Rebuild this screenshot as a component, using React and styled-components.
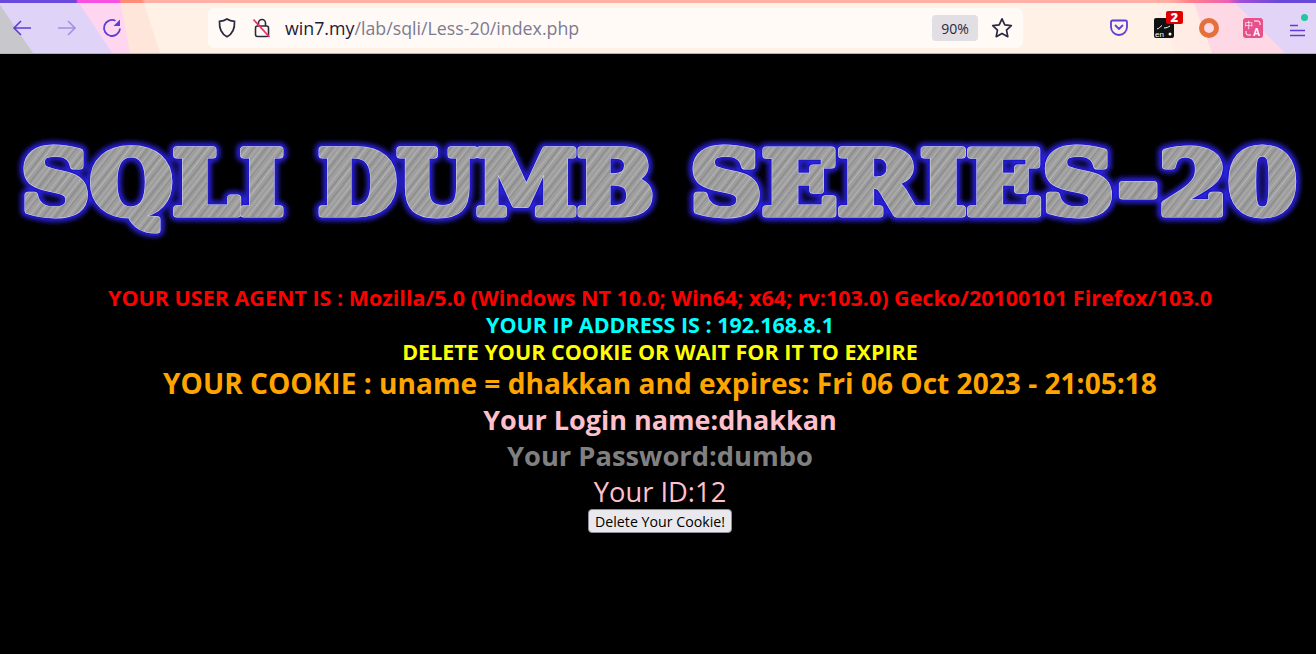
import React from "react";
import styled, { createGlobalStyle } from "styled-components";

const GlobalStyle = createGlobalStyle`
  html, body { margin: 0; padding: 0; background: #000; }
  body { font-family: "Open Sans", "Noto Sans", sans-serif; overflow: hidden; }
`;

const themeArt = `<svg xmlns='http://www.w3.org/2000/svg' width='1316' height='53'>
<defs><linearGradient id='g' x1='0' x2='1'><stop offset='0' stop-color='%23fff0e6'/><stop offset='0.5' stop-color='%23ffe8e4'/><stop offset='1' stop-color='%23ffdcea'/></linearGradient></defs>
<rect width='1316' height='53' fill='%23fff1e6'/>
<polygon points='1150,0 1316,0 1316,53 1175,53' fill='url(%23g)'/>
<polygon points='1193,0 1316,0 1316,53 1212,53' fill='%23ffd8e6'/>
<polygon points='1232,0 1316,0 1316,53 1285,53' fill='%23e2d4f6'/>
<polygon points='143,0 0,0 0,53 160,53' fill='%23ffe6da'/>
<polygon points='120,0 0,0 0,53 130,53' fill='%23ffd6f0'/>
<polygon points='77,0 0,0 0,53 112,53' fill='%23dfd3f7'/>
<polygon points='0,5 0,53 33,53' fill='%23c8c8cc'/>
</svg>`.replace(/\n/g, "");

const Page = styled.div`
  width: 1316px;
  height: 654px;
  background: #000;
  display: flex;
  flex-direction: column;
`;

const Toolbar = styled.div`
  height: 54px;
  flex: none;
  display: flex;
  flex-direction: column;
  box-sizing: border-box;
  border-bottom: 1px solid #c4aca0;
  background: url("data:image/svg+xml,${themeArt}") no-repeat left top;
`;

const Strip = styled.div`
  height: 3px;
  flex: none;
  background: linear-gradient(to right, #6a48dc 0 76px, #f850e0 78px 119px, #ff8c78 121px 142px, #ffb0a4 145px 1170px, #ff8088 1190px, #f060b0 1228px, #a050d8 1240px, #6848d8 1280px);
`;

const ToolRow = styled.div`
  flex: 1;
  display: flex;
  align-items: center;
`;

const NavGroup = styled.div`
  display: flex;
  align-items: center;
  width: 208px;
  padding-left: 10px;
  gap: 21px;
  flex: none;
  box-sizing: border-box;
`;

const NavButton = styled.div`
  width: 24px;
  height: 24px;
  display: flex;
  align-items: center;
  justify-content: center;
  opacity: ${(p) => (p.$off ? 0.45 : 1)};
`;

const UrlBar = styled.div`
  width: 815px;
  height: 40px;
  flex: none;
  background: #fffaf6;
  border-radius: 6px;
  display: flex;
  align-items: center;
  padding: 0 10px 0 8px;
  box-sizing: border-box;
`;

const UrlIcon = styled.div`
  width: 22px;
  height: 24px;
  margin-right: ${(p) => p.$gap}px;
  display: flex;
  align-items: center;
  justify-content: center;
`;

const UrlText = styled.div`
  flex: 1;
  font-size: 17.8px;
  color: #1c1b3a;
  white-space: nowrap;
  span { color: #7d7a92; }
`;

const ZoomBadge = styled.div`
  width: 46px;
  height: 26px;
  border-radius: 4px;
  background: #e2dfe4;
  color: #2a2840;
  font-size: 14px;
  display: flex;
  align-items: center;
  justify-content: center;
  margin-right: 13px;
`;

const RightIcons = styled.div`
  display: flex;
  align-items: center;
  flex: 1;
  padding-left: 74px;
`;

const ExtSlot = styled.div`
  width: 44.7px;
  height: 24px;
  flex: none;
  display: flex;
  align-items: center;
  justify-content: center;
  position: relative;
`;

const RedBadge = styled.div`
  position: absolute;
  top: -5px;
  left: 24px;
  width: 17px;
  height: 13px;
  background: #e00000;
  border-radius: 2px;
  color: #fff;
  font-size: 13px;
  font-weight: 800;
  line-height: 13px;
  text-align: center;
`;

const GreenDot = styled.div`
  position: absolute;
  top: -2px;
  right: 12px;
  width: 7px;
  height: 7px;
  border-radius: 50%;
  background: #20c8a0;
`;

const Content = styled.main`
  flex: 1;
  display: flex;
  flex-direction: column;
  align-items: center;
  padding: 73px 0 0 4px;
`;

const Banner = styled.svg`
  display: block;
  width: 1316px;
  height: 120px;
  flex: none;
  margin: 0 0 37px -4px;
`;

const Line = styled.div`
  color: ${(p) => p.$color};
  font-size: ${(p) => p.$size}px;
  line-height: ${(p) => p.$height}px;
  font-weight: ${(p) => p.$weight || 700};
  white-space: nowrap;
  text-align: center;
`;

const DeleteButton = styled.button`
  font-family: "Open Sans", "Noto Sans", sans-serif;
  font-size: 14.2px;
  height: 24px;
  width: 144px;
  margin-top: -1px;
  padding: 0;
  color: #000;
  background: #e9e9ed;
  border: 1px solid #8f8f9d;
  border-radius: 4px;
`;

const stroke = "#5b3fd6";

export default function App() {
  return (
    <Page>
      <GlobalStyle />
      <Toolbar>
        <Strip />
        <ToolRow>
          <NavGroup>
            <NavButton>
              <svg width="22" height="22" viewBox="0 0 22 22" fill="none" stroke={stroke} strokeWidth="1.6">
                <path d="M20 11H3M10 4l-7 7 7 7" />
              </svg>
            </NavButton>
            <NavButton $off>
              <svg width="22" height="22" viewBox="0 0 22 22" fill="none" stroke={stroke} strokeWidth="1.6">
                <path d="M2 11h17M12 4l7 7-7 7" />
              </svg>
            </NavButton>
            <NavButton>
              <svg width="22" height="22" viewBox="0 0 22 22" fill="none" stroke={stroke} strokeWidth="1.8">
                <path d="M19 11.500A8 8 0 1 1 14.500 3.800" />
                <path d="M19 2.500v6.500h-6.500z" fill={stroke} stroke="none" />
              </svg>
            </NavButton>
          </NavGroup>
          <UrlBar>
            <UrlIcon $gap={13}>
              <svg width="20" height="22" viewBox="0 0 20 22" fill="none" stroke="#2a2840" strokeWidth="1.7">
                <path d="M10 2c2 1.400 4.600 2.200 7.500 2.300.4 7-1.800 12.600-7.500 15.500C4.300 16.900 2.100 11.300 2.500 4.300 5.400 4.200 8 3.400 10 2z" />
              </svg>
            </UrlIcon>
            <UrlIcon $gap={12}>
              <svg width="20" height="22" viewBox="0 0 20 22" fill="none">
                <path d="M6.500 9V6a3.500 3.500 0 0 1 7 0v3" stroke="#2a2840" strokeWidth="1.600" />
                <rect x="3.500" y="9" width="13" height="10.500" rx="2" stroke="#2a2840" strokeWidth="1.600" />
                <path d="M1.500 2.500 17.500 20" stroke="#f03060" strokeWidth="1.800" />
              </svg>
            </UrlIcon>
            <UrlText>
              win7.my<span>/lab/sqli/Less-20/index.php</span>
            </UrlText>
            <ZoomBadge>90%</ZoomBadge>
            <svg width="22" height="22" viewBox="0 0 22 22" fill="none" stroke="#2a2840" strokeWidth="1.700" strokeLinejoin="round">
              <path d="M11 1.800l2.800 6.100 6.500.8-4.800 4.500 1.300 6.500-5.800-3.300-5.800 3.300 1.300-6.500L1.700 8.700l6.500-.8z" />
            </svg>
          </UrlBar>
          <RightIcons>
            <ExtSlot>
              <svg width="20" height="20" viewBox="0 0 20 20" fill="none" stroke={stroke} strokeWidth="1.800">
                <path d="M3.500 2.500h13A1.500 1.500 0 0 1 18 4v5a8 8 0 0 1-16 0V4a1.500 1.500 0 0 1 1.500-1.500z" />
                <path d="M6.500 7.500 10 11l3.500-3.500" strokeLinecap="round" />
              </svg>
            </ExtSlot>
            <ExtSlot>
              <svg width="20" height="20" viewBox="0 0 20 20">
                <rect width="20" height="20" rx="2" fill="#111" />
                <path d="M3 11c2-.5 3-2 5-3.500M10 10c3 0 4-1 6-2" stroke="#fff" strokeWidth="1" fill="none" />
                <circle cx="16" cy="16" r="1.500" fill="#fff" />
                <text x="1" y="19" fontSize="8" fill="#fff" fontFamily="Liberation Sans, sans-serif">en</text>
              </svg>
              <RedBadge>2</RedBadge>
            </ExtSlot>
            <ExtSlot>
              <svg width="20" height="20" viewBox="0 0 20 20" fill="none">
                <circle cx="10" cy="10" r="7.500" stroke="#e4703a" strokeWidth="5" />
              </svg>
            </ExtSlot>
            <ExtSlot>
              <svg width="20" height="20" viewBox="0 0 20 20">
                <rect width="20" height="20" rx="3" fill="#e8508c" />
                <text x="1.500" y="10" fontSize="8.500" fill="#fff" fontFamily="Noto Sans CJK SC, sans-serif">中</text>
                <text x="10" y="17.500" fontSize="10" fontWeight="700" fill="#fff" fontFamily="Liberation Sans, sans-serif">A</text>
                <path d="M11 3h4a2 2 0 0 1 2 2v2M8 17H5a2 2 0 0 1-2-2v-2" stroke="#fff" strokeWidth="1" fill="none" />
              </svg>
            </ExtSlot>
            <ExtSlot>
              <svg width="18" height="14" viewBox="0 0 18 14" stroke={stroke} strokeWidth="1.500" style={{ marginTop: 4 }}>
                <path d="M1 2.500h8M1 7.500h15M1 12.500h15" />
              </svg>
              <GreenDot />
            </ExtSlot>
          </RightIcons>
        </ToolRow>
      </Toolbar>
      <Content>
        <Banner viewBox="0 0 1316 120">
          <defs>
            <pattern id="brushed" width="31" height="31" patternUnits="userSpaceOnUse" patternTransform="rotate(-52)">
              <rect width="31" height="31" fill="#9e9e9e" />
              <rect y="2" width="31" height="1" fill="#b4b4b4" />
              <rect y="5" width="31" height="1.500" fill="#8a8a8a" />
              <rect y="9" width="31" height="1" fill="#adadad" />
              <rect y="11" width="31" height="1" fill="#8e8e8e" />
              <rect y="15" width="31" height="2" fill="#aaaaaa" />
              <rect y="19" width="31" height="1" fill="#858585" />
              <rect y="22" width="31" height="1" fill="#b8b8b8" />
              <rect y="26" width="31" height="1.500" fill="#8c8c8c" />
              <rect y="29" width="31" height="1" fill="#acacac" />
            </pattern>
            <filter id="glow" x="-5%" y="-20%" width="110%" height="140%">
              <feGaussianBlur stdDeviation="2.500" />
            </filter>
            <g id="title" fontFamily="'DejaVu Serif', serif" fontWeight="700" fontSize="87" strokeLinejoin="round">
              <text x="21" y="87" textLength="263" lengthAdjust="spacingAndGlyphs">SQLI</text>
              <text x="318" y="87" textLength="336" lengthAdjust="spacingAndGlyphs">DUMB</text>
              <text x="690" y="87" textLength="607" lengthAdjust="spacingAndGlyphs">SERIES-20</text>
            </g>
          </defs>
          <use href="#title" fill="#2a20d8" stroke="#2a20d8" strokeWidth="14" filter="url(#glow)" />
          <use href="#title" fill="#2018b8" stroke="#2018c8" strokeWidth="10" />
          <use href="#title" fill="#dcdcec" stroke="#dcdcec" strokeWidth="7" />
          <use href="#title" fill="url(#brushed)" stroke="url(#brushed)" strokeWidth="6" />
        </Banner>
        <Line $color="#f00" $size={21.5} $height={27}>YOUR USER AGENT IS : Mozilla/5.0 (Windows NT 10.0; Win64; x64; rv:103.0) Gecko/20100101 Firefox/103.0</Line>
        <Line $color="#0ff" $size={21.5} $height={27}>YOUR IP ADDRESS IS : 192.168.8.1</Line>
        <Line $color="#ff0" $size={21.5} $height={27}>DELETE YOUR COOKIE OR WAIT FOR IT TO EXPIRE</Line>
        <Line $color="#ffa500" $size={28.1} $height={37}>YOUR COOKIE : uname = dhakkan and expires: Fri 06 Oct 2023 - 21:05:18</Line>
        <Line $color="#ffc0cb" $size={27} $height={36}>Your Login name:dhakkan</Line>
        <Line $color="#808080" $size={27.3} $height={36}>Your Password:dumbo</Line>
        <Line $color="#ffc0cb" $size={27.3} $height={36} $weight={400}>Your ID:12</Line>
        <DeleteButton>Delete Your Cookie!</DeleteButton>
      </Content>
    </Page>
  );
}
